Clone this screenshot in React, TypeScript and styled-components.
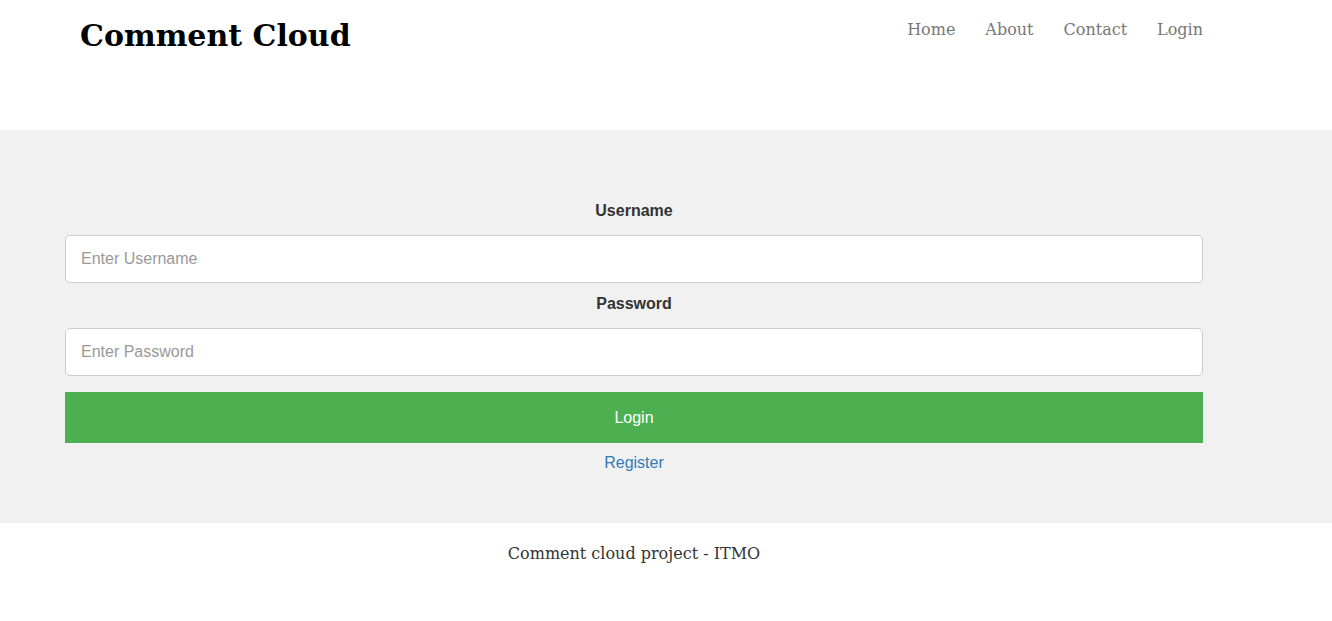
import styled, { createGlobalStyle } from "styled-components";

const GlobalStyle = createGlobalStyle`
	body {
		margin: 0;
		background: #fff;
		font-family: "DejaVu Serif", serif;
	}
`;

const Header = styled.header`
	height: 130px;
	display: flex;
	justify-content: space-between;
	align-items: flex-start;
	padding: 0 129px 0 80px;
`;

const Brand = styled.h1`
	margin: 18px 0 0;
	font-family: "DejaVu Serif", serif;
	font-size: 30px;
	font-weight: 700;
	color: #000;
	line-height: 36px;
`;

const Nav = styled.nav`
	display: flex;
	gap: 30px;
	margin-top: 19px;
`;

const NavLink = styled.a`
	font-size: 16px;
	line-height: 22px;
	color: #777;
	text-decoration: none;
`;

const Band = styled.main`
	background: #f1f1f1;
	padding: 70px 129px 50px 65px;
`;

const Form = styled.form`
	display: flex;
	flex-direction: column;
	font-family: "Liberation Sans", Arial, sans-serif;
`;

const Label = styled.label<{ $first?: boolean }>`
	display: block;
	text-align: center;
	font-size: 16px;
	font-weight: 700;
	line-height: 22px;
	color: #333;
	margin: ${(p) => (p.$first ? "0" : "10px")} 0 13px;
`;

const Input = styled.input`
	box-sizing: border-box;
	width: 100%;
	height: 48px;
	padding: 0 15px;
	border: 1px solid #ccc;
	border-radius: 5px;
	background: #fff;
	font-family: "Liberation Sans", Arial, sans-serif;
	font-size: 16px;
	color: #333;
	outline: none;
	&::placeholder {
		color: #999;
	}
`;

const Button = styled.button`
	margin-top: 16px;
	height: 51px;
	border: none;
	background: #4caf50;
	color: #fff;
	font-family: "Liberation Sans", Arial, sans-serif;
	font-size: 16px;
	cursor: pointer;
`;

const Register = styled.a`
	display: block;
	margin-top: 10px;
	text-align: center;
	font-size: 16px;
	line-height: 20px;
	color: #337ab7;
	text-decoration: none;
`;

const Footer = styled.footer`
	padding: 21px 129px 0 65px;
	text-align: center;
	font-size: 16px;
	line-height: 20px;
	color: #333;
`;

const links = ["Home", "About", "Contact", "Login"];

export default function App(): JSX.Element {
	return (
		<>
			<GlobalStyle />
			<Header>
				<Brand>Comment Cloud</Brand>
				<Nav>
					{links.map((l) => (
						<NavLink key={l} href="#">
							{l}
						</NavLink>
					))}
				</Nav>
			</Header>
			<Band>
				<Form onSubmit={(e) => e.preventDefault()}>
					<Label $first htmlFor="username">
						Username
					</Label>
					<Input id="username" placeholder="Enter Username" />
					<Label htmlFor="password">Password</Label>
					<Input id="password" type="password" placeholder="Enter Password" />
					<Button type="submit">Login</Button>
					<Register href="#">Register</Register>
				</Form>
			</Band>
			<Footer>Comment cloud project - ITMO</Footer>
		</>
	);
}
